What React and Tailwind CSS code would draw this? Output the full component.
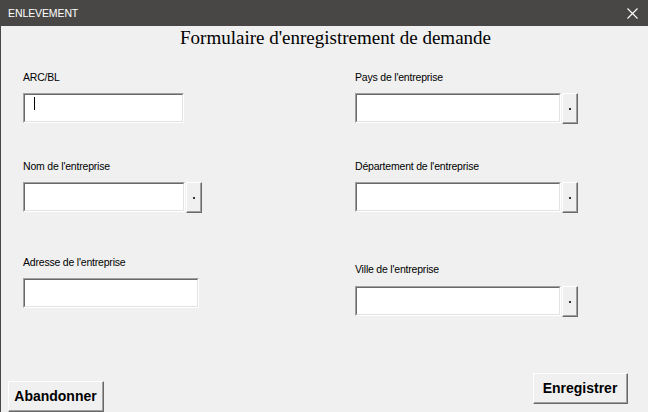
import React from 'react';

const labelFont = { fontFamily: '"Liberation Sans", Arial, sans-serif' };

// sunken text box, Windows style
const TextBox = ({ width, caret }) => (
  <div
    className="h-[30px] border-t border-l border-[#a0a0a0] border-b border-r border-b-white border-r-white"
    style={{ width }}
  >
    <div className="relative h-full border-t border-l border-[#696969] border-b border-r border-b-[#e3e3e3] border-r-[#e3e3e3] bg-white">
      {caret && <div className="absolute left-[9px] top-[2px] w-[1px] h-[13px] bg-black"></div>}
    </div>
  </div>
);

const DotButton = () => (
  <div className="w-[16px] h-[31px] border-t border-l border-white border-b border-r border-b-[#696969] border-r-[#696969]">
    <div className="h-full flex items-center justify-center border-b border-r border-[#a0a0a0] border-t-0 border-l-0 bg-[#f0f0f0]">
      <div className="w-[2px] h-[2px] bg-[#333] mt-[2px]"></div>
    </div>
  </div>
);

const Field = ({ label, width, button, caret, gap = 'mt-[9px]' }) => (
  <div className="flex flex-col">
    <div className="h-[14px] leading-[14px] text-[10.5px] tracking-[-0.2px] text-black" style={labelFont}>
      {label}
    </div>
    <div className={`flex items-start gap-[1px] ${gap}`}>
      <TextBox width={width} caret={caret} />
      {button && <DotButton />}
    </div>
  </div>
);

const BigButton = ({ children, className }) => (
  <div className={`border-t border-l border-white border-b border-r border-b-[#696969] border-r-[#696969] ${className}`}>
    <div
      className="h-full flex items-center justify-center border-b border-r border-[#a0a0a0] border-t-0 border-l-0 bg-[#f0f0f0] text-[14px] font-bold text-black"
      style={labelFont}
    >
      {children}
    </div>
  </div>
);

export default function App() {
  return (
    <div className="w-[648px] h-[412px] flex flex-col overflow-hidden">
      {/* title bar */}
      <div className="h-[26px] bg-[#494745] flex items-center justify-between pl-[8px] pr-[5px]">
        <span className="text-white text-[10.5px] tracking-[-0.1px] mt-[1px]" style={labelFont}>ENLEVEMENT</span>
        <svg width="11" height="11" viewBox="0 0 11 11" className="mr-[5px]">
          <path d="M0.5 0.5 L10.5 10.5 M10.5 0.5 L0.5 10.5" stroke="#ffffff" strokeWidth="1.1" />
        </svg>
      </div>

      <div className="flex-1 flex flex-col bg-[#f0f0f0] border-l border-[#494745]">
        <h1
          className="h-[24px] leading-[24px] pl-[179px] text-[19px] text-black"
          style={{ fontFamily: '"Liberation Serif", "Times New Roman", serif' }}
        >
          Formulaire d'enregistrement de demande
        </h1>

        <div className="flex mt-[20px]">
          {/* left column */}
          <div className="w-[332px] pl-[22px] flex flex-col">
            <Field label="ARC/BL" width={161} caret />
            <div className="mt-[36px]">
              <Field label="Nom de l'entreprise" width={162} button />
            </div>
            <div className="mt-[42px]">
              <Field label="Adresse de l'entreprise" width={176} />
            </div>
          </div>

          {/* right column */}
          <div className="pl-[22px] flex flex-col">
            <Field label="Pays de l'entreprise" width={206} button />
            <div className="mt-[35px]">
              <Field label="Département de l'entreprise" width={206} button />
            </div>
            <div className="mt-[49px]">
              <Field label="Ville de l'entreprise" width={206} button gap="mt-[10px]" />
            </div>
          </div>
        </div>

        <div className="mt-auto flex justify-between items-start h-[39px]">
          <BigButton className="ml-[7px] mt-[8px] w-[96px] h-[31px]">Abandonner</BigButton>
          <BigButton className="mr-[20px] w-[95px] h-[31px]">Enregistrer</BigButton>
        </div>
      </div>
    </div>
  );
}
